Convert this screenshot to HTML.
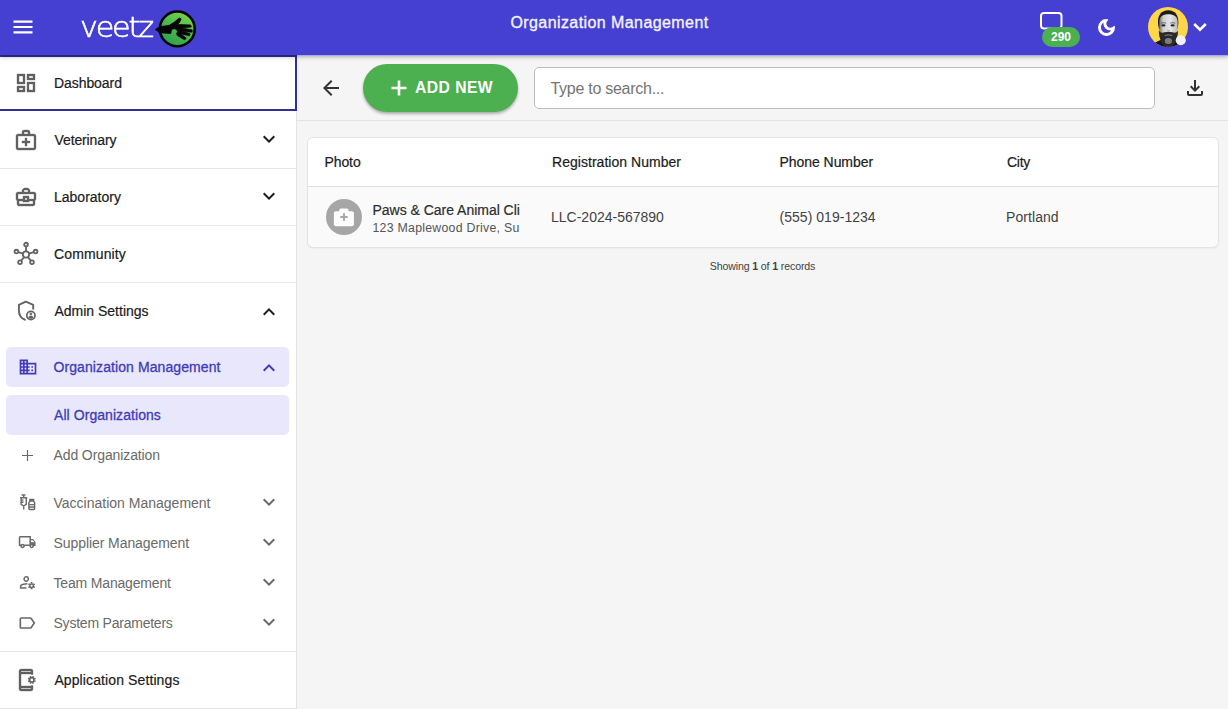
<!DOCTYPE html>
<html lang="en">
<head>
<meta charset="utf-8">
<title>Organization Management</title>
<style>
*{box-sizing:border-box;margin:0;padding:0}
html,body{width:1228px;height:709px;overflow:hidden;background:#f5f5f5;font-family:"Liberation Sans",sans-serif;color:#212121}
svg{display:block;position:absolute;overflow:visible}
#header{position:absolute;left:0;top:0;width:1228px;height:55px;background:#4540d1;z-index:10;box-shadow:0 1px 5px rgba(0,0,0,.42)}
#title{position:absolute;left:0;width:1219px;top:13px;text-align:center;color:#f3f2ff;font-size:16px;letter-spacing:.42px;line-height:20px;-webkit-text-stroke:.35px #f3f2ff}
#logo{position:absolute;left:80px;top:9px;font-family:"DejaVu Sans Light","DejaVu Sans",sans-serif;font-weight:200;font-size:27.5px;line-height:36px;color:#fff;letter-spacing:-2px;white-space:nowrap;transform-origin:0 50%;transform:scaleX(1.1);-webkit-text-stroke:.6px #fff}
#badge{position:absolute;left:1042px;top:27px;width:38px;height:19.5px;border-radius:10px;background:#4caf50;color:#fff;font-weight:bold;font-size:12px;line-height:21px;text-align:center}
#sidebar{position:absolute;left:0;top:55px;width:297px;height:654px;background:#fff;border-right:1px solid #e3e3e3;z-index:5}
.item{position:absolute;left:0;width:296px;height:57px;border-bottom:1px solid #e6e6e6}
.item .lbl{position:absolute;left:54px;top:19px;font-size:14px;line-height:18px;color:#1c1c1c;white-space:nowrap;-webkit-text-stroke:.2px #1c1c1c}
.item svg.i24{left:14px;top:16px;width:24px;height:24px;fill:#616161;stroke:#616161;stroke-width:.35px}
.item svg.chev{left:257px;top:16px;width:24px;height:24px;fill:#1c1c1c}
.sub{position:absolute;left:6px;width:283px;height:40px;border-radius:5px}
.sub .lbl{position:absolute;left:47.5px;top:11px;font-size:14px;line-height:18px;color:#6a6a6a;white-space:nowrap}
.sub svg.i20{left:12px;top:10px;width:20px;height:20px;fill:#6a6a6a}
.sub svg.chev{left:251px;top:8px;width:24px;height:24px;fill:#6a6a6a}
.sub.act{background:#e9e7fb}
.sub.act .lbl{color:#403cb8;-webkit-text-stroke:.3px #403cb8}
.sub.act svg{fill:#403cb8}
#main{position:absolute;left:297px;top:55px;width:931px;height:654px;background:#f5f5f5}
#toolbar{position:absolute;left:0;top:0;width:931px;height:66px;border-bottom:1px solid #e2e2e2}
#addnew{position:absolute;left:66px;top:9px;width:155px;height:48px;border-radius:24px;background:#4caf50;color:#fff;font-weight:bold;font-size:15.7px;letter-spacing:.45px;box-shadow:0 2px 3px rgba(0,0,0,.3)}
#addnew span{position:absolute;left:52px;top:15px;line-height:18px;white-space:nowrap}
#search{position:absolute;left:237px;top:12px;width:621px;height:42px;border:1px solid #bdbdbd;border-radius:5px;background:#fff}
#search span{position:absolute;left:15.5px;top:12px;font-size:16px;letter-spacing:-.27px;line-height:18px;color:#757575;white-space:nowrap}
#card{position:absolute;left:11px;top:83px;width:910px;height:109px;border-radius:5px;background:#fafafa;box-shadow:0 0 0 1px #e3e3e3,0 1px 2px rgba(0,0,0,.1);overflow:hidden}
#thead{position:absolute;left:0;top:0;width:910px;height:49px;background:#fff;border-bottom:1px solid #e0e0e0}
.th{position:absolute;top:15px;font-size:14px;line-height:18px;color:#1c1c1c;white-space:nowrap;-webkit-text-stroke:.2px #1c1c1c}
.td{position:absolute;top:70px;font-size:14px;line-height:18px;color:#424242;white-space:nowrap}
#photo{position:absolute;left:18px;top:61px;width:36px;height:36px;border-radius:50%;background:#a6a6a6}
#nm{position:absolute;left:64.5px;top:63px;width:150px;overflow:hidden;font-size:14px;line-height:18px;color:#2e2e2e;white-space:nowrap;-webkit-text-stroke:.2px #2e2e2e;letter-spacing:-.02px}
#ad{position:absolute;left:64.5px;top:82px;width:150px;overflow:hidden;font-size:12.3px;line-height:16px;color:#555;white-space:nowrap;letter-spacing:.27px}
#foot{position:absolute;left:0;top:204px;width:931px;text-align:center;font-size:10.6px;letter-spacing:-.13px;line-height:14px;color:#424242}
</style>
</head>
<body>
<div id="header">
  <svg style="left:11px;top:15px" width="24" height="24" viewBox="0 0 24 24" fill="#fff"><path d="M2.5 18.4h19v-2.1h-19v2.1zm0-5.35h19v-2.1h-19v2.1zM2.5 5.6v2.1h19V5.6h-19z"/></svg>
  <div id="logo">veetz</div>
  <svg id="hand" style="left:0;top:0" width="220" height="55" viewBox="0 0 220 55">
    <linearGradient id="gg" x1="0.8" y1="0.1" x2="0.25" y2="0.95"><stop offset="0" stop-color="#76d14c"/><stop offset=".5" stop-color="#4cb850"/><stop offset="1" stop-color="#2f9f4a"/></linearGradient>
    <circle cx="177.3" cy="28.9" r="17.4" fill="url(#gg)" stroke="#050505" stroke-width="2.6"/>
    <path fill="#050505" stroke="#050505" stroke-width=".7" stroke-linejoin="round" d="M155.300 29.400L159.500 26.700L169.200 25.300L174.300 22.100L179.300 17.900L181.200 18.900L179.600 22.300L177.500 24.400L190.600 24.900L191.400 27L181.500 27.900L192.200 29.900L192.200 32.200L182 31.200L190 33.500L189.600 35.800L180.800 33.900L186.200 38L184.800 39.900L177.300 35.600L176.500 33.800L177.600 31.200L176 29.300L174.300 28.700L172.500 29.200L171.400 30.100L171.200 32L170.700 33.600L159.500 32.800Z"/>
  </svg>
  <div id="title">Organization Management</div>
  <svg style="left:1040px;top:11.5px" width="23" height="18" viewBox="0 0 23 18"><rect x="1" y="1" width="20.5" height="15.5" rx="3" fill="none" stroke="#fff" stroke-width="2"/></svg>
  <div id="badge">290</div>
  <svg style="left:1095.500px;top:16.500px" width="21" height="21" viewBox="0 0 24 24" fill="#fff" stroke="#fff" stroke-width="1.300" stroke-linejoin="round"><path d="M9.37 5.51C9.19 6.15 9.1 6.82 9.1 7.5c0 4.08 3.32 7.4 7.4 7.4.68 0 1.35-.09 1.99-.27C17.45 17.19 14.93 19 12 19c-3.86 0-7-3.14-7-7 0-2.93 1.81-5.45 4.37-6.49zM12 3c-4.97 0-9 4.030-9 9s4.030 9 9 9 9-4.030 9-9c0-.46-.04-.92-.1-1.360-.98 1.370-2.580 2.260-4.400 2.260-2.980 0-5.400-2.420-5.400-5.400 0-1.810.89-3.420 2.260-4.400-.44-.06-.9-.1-1.360-.1z"/></svg>
  <svg id="avatar" style="left:1148px;top:7px" width="40" height="40" viewBox="0 0 40 40">
    <clipPath id="ac"><circle cx="20" cy="20" r="20"/></clipPath>
    <filter id="bl" x="-20%" y="-20%" width="140%" height="140%"><feGaussianBlur stdDeviation=".55"/></filter>
    <linearGradient id="fg" x1="0" y1="0" x2="1" y2="0"><stop offset="0" stop-color="#6f6f6f"/><stop offset=".22" stop-color="#cfcfcf"/><stop offset=".6" stop-color="#e6e6e6"/><stop offset="1" stop-color="#bdbdbd"/></linearGradient>
    <g clip-path="url(#ac)">
      <rect width="40" height="40" fill="#ffd54a"/>
      <g filter="url(#bl)">
        <path d="M3 41C4.500 36.500 8 35 12.500 33L28 34C33 35.500 34 38 35 41Z" fill="#141414"/>
        <path d="M10 17C9.300 8 13.500 3.300 20.300 3.300C27 3.300 30.800 8 30.300 17L29.500 22L11 22Z" fill="#1e1e1e"/>
        <path d="M11.300 15C11.300 9.500 15 7.300 20.300 7.300C25.800 7.300 29.600 9.500 29.600 15L29.600 26C29.600 33 25 39.500 20.400 39.500C15.800 39.500 11.300 33 11.300 26Z" fill="url(#fg)"/>
        <path d="M10.800 23.500C10.800 33 15.500 40 20.400 40C25.400 40 30 33 30 23.500C28.800 25.800 26.500 26 24.500 25.300C22 24.500 19 24.500 16.500 25.300C14.500 26 12 25.800 10.800 23.500Z" fill="#2c2c2c"/>
        <ellipse cx="20.400" cy="34" rx="3.600" ry="3" fill="#7d7d7d"/>
        <path d="M16.800 28.600C19 27.700 22 27.700 24.200 28.600" stroke="#8a8a8a" stroke-width="1" fill="none"/>
        <ellipse cx="15.400" cy="18.400" rx="2.100" ry="1.050" fill="#262626"/>
        <ellipse cx="24.600" cy="18.400" rx="2.100" ry="1.050" fill="#262626"/>
        <path d="M13 16.300C14.500 15.500 16.500 15.500 18 16.200M22.300 16.200C23.800 15.500 25.800 15.500 27.300 16.300" stroke="#555" stroke-width=".9" fill="none"/>
        <path d="M19 23.300C19.800 24 21 24 21.800 23.300" stroke="#9a9a9a" stroke-width=".8" fill="none"/>
      </g>
    </g>
    <circle cx="32.800" cy="33.200" r="5" fill="#f1f1f1"/>
  </svg>
  <svg style="left:1192px;top:20px" width="16" height="14" viewBox="0 0 16 14"><path d="M2.200 4L8 9.600L13.800 4" fill="none" stroke="#fff" stroke-width="2.600"/></svg>
</div>
<div id="sidebar">
  <div class="item" style="top:0;box-shadow:inset -2px -2px 0 0 #322e9b,inset 0 2px 0 0 #322e9b;width:297px;border-bottom:none;height:56px">
    <svg class="i24" viewBox="0 0 24 24"><path d="M19 5v2h-4V5h4M9 5v6H5V5h4m10 8v6h-4v-6h4M9 17v2H5v-2h4M21 3h-8v6h8V3zM11 3H3v10h8V3zm10 8h-8v10h8V11zm-10 4H3v6h8v-6z"/></svg>
    <span class="lbl" style="letter-spacing:-0.07px">Dashboard</span>
  </div>
  <div class="item" style="top:57px">
    <svg class="i24" viewBox="0 0 24 24"><path d="M20 6h-4V4c0-1.100-.9-2-2-2h-4c-1.100 0-2 .9-2 2v2H4c-1.100 0-2 .9-2 2v12c0 1.100.9 2 2 2h16c1.100 0 2-.9 2-2V8c0-1.100-.9-2-2-2zM10 4h4v2h-4V4zm10 16H4V8h16v12z"/><path d="M13 10h-2v3H8v2h3v3h2v-3h3v-2h-3z"/></svg>
    <span class="lbl" style="letter-spacing:-0.113px;margin-left:.5px">Veterinary</span><svg class="chev" style="margin-top:-.7px" viewBox="0 0 24 24"><path d="M16.59 8.59L12 13.170 7.410 8.590 6 10l6 6 6-6z"/></svg>
  </div>
  <div class="item" style="top:114px">
    <svg class="i24" viewBox="0 0 24 24"><path d="M20 7h-4V5l-2-2h-4L8 5v2H4c-1.100 0-2 .9-2 2v5c0 .75.4 1.380 1 1.730V19c0 1.110.89 2 2 2h14c1.110 0 2-.89 2-2v-3.280c.59-.35 1-.99 1-1.720V9c0-1.100-.9-2-2-2zM10 5h4v2h-4V5zM4 9h16v5h-5v-3H9v3H4V9zm9 6h-2v-2h2v2zm6 4H5v-3h4v1h6v-1h4v3z"/></svg>
    <span class="lbl" style="letter-spacing:-0.003px">Laboratory</span><svg class="chev" style="margin-top:-.7px" viewBox="0 0 24 24"><path d="M16.59 8.59L12 13.170 7.410 8.590 6 10l6 6 6-6z"/></svg>
  </div>
  <div class="item" style="top:171px">
    <svg style="left:12px;top:14px;width:28px;height:28px" viewBox="0 0 28 28" fill="none" stroke="#636363" stroke-width="1.800"><path d="M14 11.300V6.700M11.100 13.600L6.300 12.200M16.900 13.600L21.700 12.200M12.200 17L9.200 20.600M15.800 17L18.800 20.600"/><circle cx="14" cy="14.500" r="3.100"/><circle cx="14" cy="4.600" r="1.850"/><circle cx="4.400" cy="11.600" r="1.850"/><circle cx="23.600" cy="11.600" r="1.850"/><circle cx="8" cy="22.200" r="1.850"/><circle cx="20" cy="22.200" r="1.850"/></svg>
    <span class="lbl" style="letter-spacing:0.13px">Community</span>
  </div>
  <div class="item" style="top:228px;border-bottom:none">
    <svg class="i24" viewBox="0 0 24 24"><path d="M19.200 10.600V5.900L11.900 2.700L4.900 5.900V11.400C4.900 15.900 7.700 19.600 11.500 21" fill="none" stroke="#636363" stroke-width="1.900" stroke-linejoin="round"/><circle cx="16.900" cy="16.500" r="4.100" fill="none" stroke="#636363" stroke-width="1.700"/><circle cx="16.900" cy="15.100" r="1.150"/><path d="M14.400 18.300c.3-.9 1.500-1.300 2.500-1.300s2.200.4 2.500 1.300c-.6.800-1.500 1.300-2.500 1.300s-1.900-.5-2.500-1.300z"/></svg>
    <span class="lbl" style="letter-spacing:0.004px;margin-left:.4px">Admin Settings</span><svg class="chev" style="margin-top:.8px" viewBox="0 0 24 24"><path d="M12 8l-6 6 1.410 1.410L12 10.830l4.590 4.580L18 14z"/></svg>
  </div>
  <div class="sub act" style="top:292px">
    <svg class="i20" viewBox="0 0 24 24"><path d="M12 7V3H2v18h20V7H12zM6 19H4v-2h2v2zm0-4H4v-2h2v2zm0-4H4V9h2v2zm0-4H4V5h2v2zm4 12H8v-2h2v2zm0-4H8v-2h2v2zm0-4H8V9h2v2zm0-4H8V5h2v2zm10 12h-8v-2h2v-2h-2v-2h2v-2h-2V9h8v10zm-2-8h-2v2h2v-2zm0 4h-2v2h2v-2z"/></svg>
    <span class="lbl" style="letter-spacing:0.089px">Organization Management</span><svg class="chev" style="margin-top:.8px" viewBox="0 0 24 24"><path d="M12 8l-6 6 1.410 1.410L12 10.830l4.590 4.580L18 14z"/></svg>
  </div>
  <div class="sub act" style="top:340px"><span class="lbl" style="left:48px;letter-spacing:0.065px">All Organizations</span></div>
  <div class="sub" style="top:380px">
    <svg style="left:15px;top:13.500px;width:13px;height:13px" viewBox="0 0 13 13" fill="none" stroke="#6a6a6a" stroke-width="1.200"><path d="M6.500 1v11M1 6.500h11"/></svg>
    <span class="lbl" style="letter-spacing:-0.107px">Add Organization</span>
  </div>
  <div class="sub" style="top:428px">
    <svg style="left:13px;top:11px;width:17px;height:18px" viewBox="0 0 17 18" fill="none" stroke="#6a6a6a" stroke-width="1.450"><path d="M2.600 .9h3.800M4.700 .9v2.700M1.100 3.700h7.200M2.150 3.700v6.600l2.550 1.700l2.550-1.700V3.700M4.700 11.800v3.700M2.200 6.100h2.300M2.200 8.300h2.300"/><path d="M10.900 5.400h3.700v1.600h-3.700zM11.200 7l-1.300 1.600v6.100c0 .4.300.7.700.7h4.300c.4 0 .7-.3.700-.7V8.600L14.300 7M9.900 10.600h5.700M9.900 13h5.700"/></svg>
    <span class="lbl" style="letter-spacing:0.003px">Vaccination Management</span><svg class="chev" style="margin-top:-.7px" viewBox="0 0 24 24"><path d="M16.59 8.59L12 13.170 7.410 8.590 6 10l6 6 6-6z"/></svg>
  </div>
  <div class="sub" style="top:468px">
    <svg class="i20" style="left:12.400px;top:10.300px;width:18.300px;height:18.300px" viewBox="0 0 24 24"><path d="M20 8h-3V4H3c-1.100 0-2 .9-2 2v11h2c0 1.660 1.340 3 3 3s3-1.340 3-3h6c0 1.660 1.340 3 3 3s3-1.340 3-3h2v-5l-3-4zm-.5 1.500l1.960 2.500H17V9.500h2.500zM6 18c-.55 0-1-.45-1-1s.45-1 1-1 1 .45 1 1-.45 1-1 1zm2.220-3c-.55-.61-1.330-1-2.220-1s-1.670.39-2.220 1H3V6h12v9H8.220zM18 18c-.55 0-1-.45-1-1s.45-1 1-1 1 .45 1 1-.45 1-1 1z"/></svg>
    <span class="lbl" style="letter-spacing:-0.074px">Supplier Management</span><svg class="chev" style="margin-top:-.7px" viewBox="0 0 24 24"><path d="M16.59 8.59L12 13.170 7.410 8.590 6 10l6 6 6-6z"/></svg>
  </div>
  <div class="sub" style="top:508px">
    <svg style="left:13px;top:12px;width:18px;height:16px" viewBox="0 0 18 16" fill="none" stroke="#6a6a6a" stroke-width="1.500"><circle cx="7.200" cy="4" r="2.150"/><path d="M8.400 8.800L4.400 9.300C2.600 9.600 1.600 10.500 1.600 11.700V13.100H7.500"/><circle cx="12.600" cy="10.700" r="1.800"/><path d="M12.600 7.100v1.300M12.600 13v1.300M9.500 8.900l1.150.65M14.550 11.850l1.150.65M15.700 8.900l-1.150.65M10.650 11.850l-1.150.65" stroke-width="1.700"/></svg>
    <span class="lbl" style="letter-spacing:-0.171px">Team Management</span><svg class="chev" style="margin-top:-.7px" viewBox="0 0 24 24"><path d="M16.59 8.59L12 13.170 7.410 8.590 6 10l6 6 6-6z"/></svg>
  </div>
  <div class="sub" style="top:548px">
    <svg class="i20" style="left:11.300px" viewBox="0 0 24 24"><path d="M17.630 5.840C17.270 5.330 16.670 5 16 5L5 5.010C3.900 5.010 3 5.900 3 7v10c0 1.100.9 1.990 2 1.990L16 19c.67 0 1.270-.33 1.630-.84L22 12l-4.370-6.160zM16 17H5V7h11l3.550 5L16 17z"/></svg>
    <span class="lbl" style="letter-spacing:-0.222px">System Parameters</span><svg class="chev" style="margin-top:-.7px" viewBox="0 0 24 24"><path d="M16.59 8.59L12 13.170 7.410 8.590 6 10l6 6 6-6z"/></svg>
  </div>
  <div class="item" style="top:596px;border-top:1px solid #e6e6e6;height:58px">
    <svg class="i24" viewBox="0 0 24 24"><path d="M17 18H7V6h10v.6h2V3c0-1.100-.9-2-2-2H7c-1.100 0-2 .9-2 2v18c0 1.100.9 2 2 2h10c1.100 0 2-.9 2-2v-3.600h-2v.6zM7 3h10v1H7V3zm10 18H7v-1h10v1z"/><circle cx="17.8" cy="11.9" r="2.200" fill="none" stroke="#616161" stroke-width="1.700"/><path d="M20.48 13.01L21.50 13.43M18.91 14.58L19.33 15.60M16.69 14.58L16.27 15.60M15.12 13.01L14.10 13.43M15.12 10.79L14.10 10.37M16.69 9.22L16.27 8.20M18.91 9.22L19.33 8.20M20.48 10.79L21.50 10.37" fill="none" stroke="#616161" stroke-width="1.700"/></svg>
    <span class="lbl" style="top:18.500px;letter-spacing:0.108px;margin-left:.4px">Application Settings</span>
  </div>
</div>
<div id="main">
  <div style="position:absolute;left:0;top:0;width:931px;height:1px;background:#aeace6;z-index:20"></div>
  <div id="toolbar">
    <svg style="left:22px;top:21px" width="24" height="24" viewBox="0 0 24 24" fill="#333"><path d="M20 11H7.830l5.590-5.590L12 4l-8 8 8 8 1.410-1.410L7.830 13H20v-2z"/></svg>
    <div id="addnew">
      <svg style="left:28px;top:16px" width="16" height="16" viewBox="0 0 16 16" fill="none" stroke="#fff" stroke-width="2.600"><path d="M8 .5v15M.5 8h15"/></svg>
      <span>ADD NEW</span>
    </div>
    <div id="search"><span>Type to search...</span></div>
    <svg style="left:886px;top:21px" width="24" height="24" viewBox="0 0 24 24" fill="#333"><path d="M18 15v3H6v-3H4v3c0 1.100.9 2 2 2h12c1.100 0 2-.9 2-2v-3h-2zm-1-4l-1.410-1.410L13 12.170V4h-2v8.170L8.410 9.590 7 11l5 5 5-5z"/></svg>
  </div>
  <div id="card">
    <div id="thead">
      <span class="th" style="left:16.500px;letter-spacing:-0.1px">Photo</span>
      <span class="th" style="left:244px;letter-spacing:0.036px">Registration Number</span>
      <span class="th" style="left:471.500px;letter-spacing:-0.05px">Phone Number</span>
      <span class="th" style="left:699px;letter-spacing:-0.283px">City</span>
    </div>
    <div id="photo">
      <svg style="left:0;top:0" width="36" height="36" viewBox="0 0 36 36"><rect x="13.300" y="9.400" width="9.200" height="6" rx="1.600" fill="#fdfdfd"/><rect x="7.900" y="12.200" width="20" height="15" rx="2" fill="#fdfdfd"/><path d="M18 14.300v7.400M14.300 18h7.400" stroke="#a6a6a6" stroke-width="1.900" fill="none"/></svg>
    </div>
    <div id="nm">Paws &amp; Care Animal Cli</div>
    <div id="ad">123 Maplewood Drive, Su</div>
    <span class="td" style="left:244px;letter-spacing:0.003px;margin-left:-1px">LLC-2024-567890</span>
    <span class="td" style="left:471.500px;letter-spacing:0.032px">(555) 019-1234</span>
    <span class="td" style="left:699px;letter-spacing:0.071px;margin-left:-1px">Portland</span>
  </div>
  <div id="foot">Showing <b>1</b> of <b>1</b> records</div>
</div>
</body>
</html>
